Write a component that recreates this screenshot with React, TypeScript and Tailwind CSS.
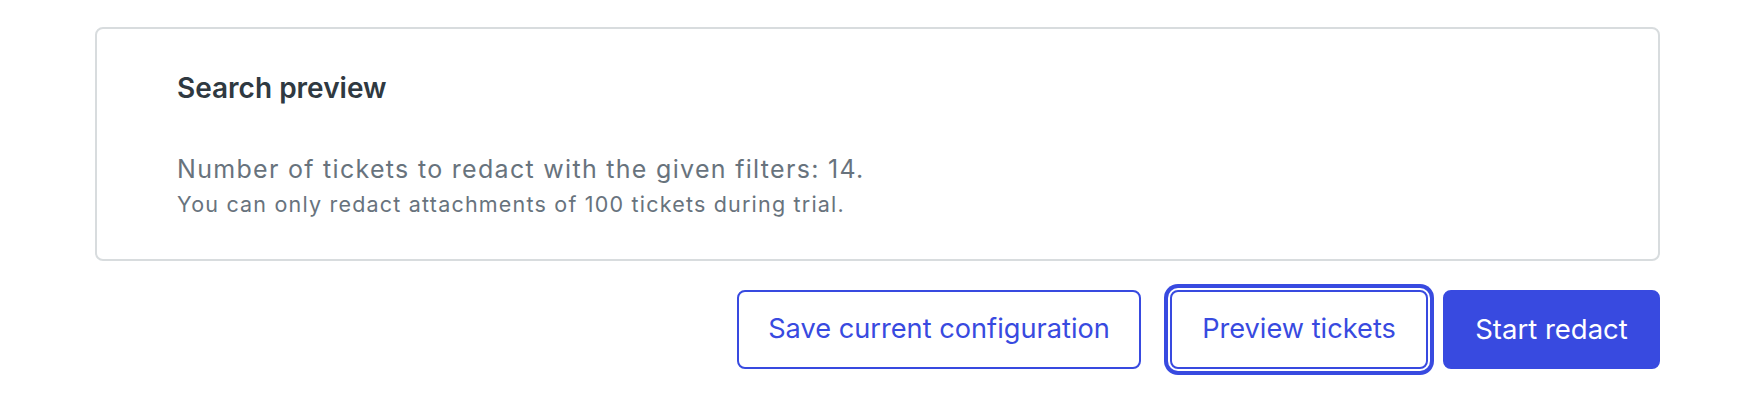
import React from "react";

export default function App() {
  const font = { fontFamily: "Inter, 'Noto Sans', sans-serif" };
  return (
    <div className="w-[1744px] h-[404px] bg-white" style={font}>
      <div className="ml-[95px] w-[1565px] pt-[27px]">
        <div className="rounded-[8px] border-2 border-[#d8dcde] bg-white pl-[80px] pt-[39px] pb-[40px]">
          <h2 className="text-[28px] leading-[40px] font-semibold text-[#2f3941]">
            Search preview
          </h2>
          <p className="mt-[44px] text-[25px] leading-[35px] tracking-[1.3px] text-[#68737d]">
            Number of tickets to redact with the given filters: 14.
          </p>
          <p className="mt-[2px] text-[21.5px] leading-[30px] tracking-[1.2px] text-[#68737d]">
            You can only redact attachments of 100 tickets during trial.
          </p>
        </div>
        <div className="mt-[29px] flex justify-end items-center">
          <button className="mr-[29px] flex h-[79px] w-[404px] items-center justify-center rounded-[8px] border-2 border-[#384ae0] bg-white text-[27.2px] text-[#384ae0]">
            Save current configuration
          </button>
          <button className="mr-[15px] flex h-[79px] w-[258px] items-center justify-center rounded-[8px] border-2 border-[#384ae0] bg-white text-[27.2px] text-[#384ae0] ring-4 ring-[#384ae0] ring-offset-2 ring-offset-white">
            Preview tickets
          </button>
          <button className="flex h-[79px] w-[217px] items-center justify-center rounded-[8px] border-2 border-[#384ae0] bg-[#384ae0] text-[27.5px] text-white">
            Start redact
          </button>
        </div>
      </div>
    </div>
  );
}
